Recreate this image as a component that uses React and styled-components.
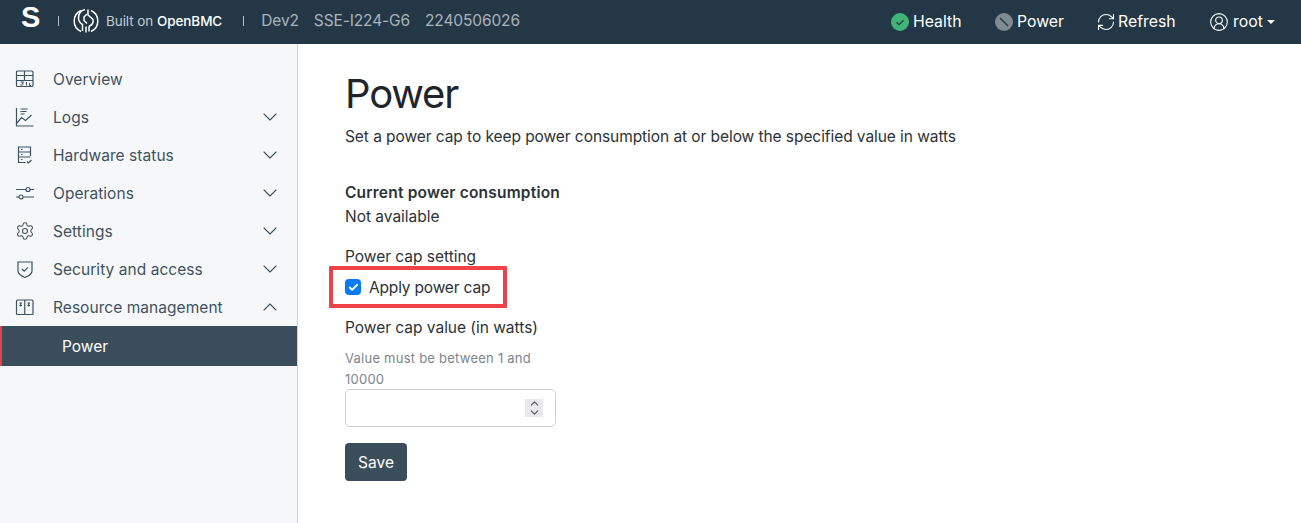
import React from 'react';
import styled, { createGlobalStyle } from 'styled-components';
import { ChevronDown, ChevronUp, RefreshCw, CircleUserRound, Settings, Check } from 'lucide-react';

const Global = createGlobalStyle`
  html, body { margin: 0; padding: 0; height: 100%; overflow: hidden; }
  body { font-family: Inter, "Noto Sans", "Liberation Sans", sans-serif; color: #212529; background: #fff; }
  * { box-sizing: border-box; }
`;
const Page = styled.div`display: flex; flex-direction: column; height: 523px;`;
const Header = styled.header`
  height: 44px; background: #233746; display: flex; align-items: center; justify-content: space-between; flex: none;
`;
const Brand = styled.div`display: flex; align-items: center; height: 100%; padding: 0 0 3px 21px; color: #b8c0c6;`;
const Logo = styled.span`font: 800 29px/1 "Liberation Sans", sans-serif; color: #fff; width: 21px; margin-top: -6px;`;
const Sep = styled.span`width: 1px; height: 10px; background: #b8c0c6; margin: ${p => p.$m};`;
const Built = styled.span`font-size: 13.5px; letter-spacing: -0.08px; color: #c4cbd0; margin-left: 7px; b { font-weight: 500; color: #fff; }`;
const Meta = styled.span`font-size: 15.5px; letter-spacing: -0.12px; color: #aab4bb; margin-right: ${p => p.$mr || 0}px;`;
const Actions = styled.div`display: flex; align-items: center; height: 100%; padding-bottom: 1px;`;
const Action = styled.div`
  display: flex; align-items: center; gap: ${p => p.$gap || 4}px; color: #fff; font-size: 15.8px; width: ${p => p.$w}px;
`;
const Caret = styled.span`
  width: 0; height: 0; border-left: 4px solid transparent; border-right: 4px solid transparent; border-top: 4px solid #fff;
`;
const Body = styled.div`display: flex; flex: 1; min-height: 0;`;
const Side = styled.nav`
  width: 298px; flex: none; background: #f5f7f9; border-right: 1px solid #cfd2d6; padding-top: 16px;
`;
const Item = styled.div`
  height: 38px; display: flex; align-items: center; padding: 0 15px; color: #3f5261; font-size: 15.5px; letter-spacing: 0.05px;
  & > span { flex: 1; margin-left: 18px; }
`;
const Sub = styled.div`
  height: 40px; display: flex; align-items: center; padding-left: 60px; background: #3a4d5b; color: #fff; font-size: 15.5px;
  border-left: 2px solid #e5414a;
`;
const Main = styled.main`flex: 1; padding: 26px 0 0 47px; min-width: 0;`;
const H1 = styled.h1`margin: 0; font-size: 40px; line-height: 48px; font-weight: 400; letter-spacing: -1.2px; color: #212529;`;
const Lead = styled.p`margin: 7px 0 0; font-size: 15.5px; line-height: 24px; letter-spacing: -0.07px; color: #2b3238;`;
const Label = styled.div`font-size: 15.5px; line-height: 24px; letter-spacing: ${p => p.$bold ? 0.2 : -0.02}px; font-weight: ${p => p.$bold ? 600 : 400}; margin-top: ${p => p.$mt || 0}px; color: #2b3238;`;
const Hl = styled.div`
  width: 178px; height: 42px; margin: -3px 0 0 -16px; border: 4px solid #ee4248; border-radius: 1px; padding-left: 12px;
  display: flex; align-items: center; gap: 8px; font-size: 15.5px; letter-spacing: -0.18px; background: #fff; color: #2b3238;
`;
const Box = styled.span`
  width: 16px; height: 16px; border-radius: 4px; background: #0b7bf5; display: flex; align-items: center; justify-content: center; flex: none;
`;
const Hint = styled.div`width: 214px; font-size: 13px; line-height: 21px; margin-top: 8px; color: #7b858d; letter-spacing: 0.24px;`;
const Input = styled.div`
  width: 211px; height: 38px; margin-top: -1px; border: 1px solid #cdd1d8; border-radius: 5px; display: flex; align-items: center; justify-content: flex-end; padding-right: 12px; background: #fff;
`;
const Spin = styled.span`
  width: 18px; height: 18px; background: #e9e9ed; display: flex; flex-direction: column; align-items: center; justify-content: center;
  svg { flex: none; margin: -2px 0; }
`;
const Save = styled.button`
  display: block; width: 62px; height: 38px; margin-top: 16px; border: 0; border-radius: 4px; background: #3a4d5b; color: #fff; font: inherit; font-size: 15.5px;
`;

const S = { fill: 'none', stroke: '#3f5261', strokeWidth: 1.2 };
const I = ({ children }) => <svg width="20" height="20" viewBox="0 0 20 20" {...S}>{children}</svg>;
const rows = [
  ['Overview', <I><rect x="1.500" y="2" width="16.500" height="15.500" rx="1" /><path d="M1.500 6.500h16.500M1.500 11.500h16.500M9.500 2v9.500" /><path d="M5.500 13h3l-1.200 1.300c1.500 0 1.500 2-2 1.700M11.500 13v3.500M14.500 14v2.500h1.500" strokeWidth="1" /></I>, 0],
  ['Logs', <I><path d="M1.500 1v18h17M5.500 2h7M5.500 4.500h6M5.500 7h4" /><path d="M2 16l4.500-5.500 4 3 6-5.500" /></I>, 'd'],
  ['Hardware status', <I><path d="M15.500 11V2H3.500v15.500h7" /><path d="M3.500 7h12M3.500 12h12M6 4.500h1.500M6 9.500h1.500M6 14.500h1.500M12 16.500l1.500 1.500 3-3" /></I>, 'd'],
  ['Operations', <I><path d="M1 6.500h10M15 6.500h4M1 14h3M8.500 14h10.500" /><circle cx="13" cy="6.500" r="2" /><circle cx="6" cy="14" r="2" /></I>, 'd'],
  ['Settings', <Settings size={20} color="#3f5261" strokeWidth={1.3} />, 'd'],
  ['Security and access', <I><path d="M3 3h14v9c0 3-3.500 5-7 6.500C6.500 17 3 15 3 12z" /><path d="M7 10l2.200 2.200 3.800-3.800" /></I>, 'd'],
  ['Resource management', <I><rect x="1.500" y="3" width="16.500" height="14.500" rx="1" /><path d="M9.750 3v14.500M4.500 6H7M4.500 8.500H7M12.500 6H15M12.500 8.500H15M5.750 6v3.500M13.750 6v3.500" /></I>, 'u'],
];

const Emblem = () => (
  <svg width="26" height="26" viewBox="0 0 26 26" fill="none" stroke="#fff" strokeWidth="1.5" style={{ marginLeft: 14 }}>
    <path d="M8 2.500C3.500 4.500 1.200 8.500 1.200 13c0 4.500 2.300 8.500 6.800 10.500M18 2.500c4.500 2 6.800 6 6.800 10.500 0 4.500-2.300 8.500-6.800 10.500" />
    <path d="M12 1.500c-4 1-6.500 4.500-6.500 8.500 0 3 1.500 5 4 6.500v6.500M14 6l-3 3v3.500l3 3" />
    <path d="M15 1.500v5.500l5 4.500c.5 3-1 5.500-3.500 6.500l-.5 1v4.500M13 24.500v-6" />
  </svg>
);

export default function App() {
  return (
    <Page>
      <Global />
      <Header>
        <Brand>
          <Logo>S</Logo>
          <Sep $m="0 0 0 16px" />
          <Emblem />
          <Built>Built on <b>OpenBMC</b></Built>
          <Sep $m="0 17px 0 21px" />
          <Meta $mr={15}>Dev2</Meta>
          <Meta $mr={15}>SSE-I224-G6</Meta>
          <Meta>2240506026</Meta>
        </Brand>
        <Actions>
          <Action $w={104}>
            <svg width="18" height="18" viewBox="0 0 18 18"><circle cx="9" cy="9" r="9" fill="#41b577" /><path d="M5.500 9.200l2.500 2.500 4.500-4.500" fill="none" stroke="#233746" strokeWidth="1.300" /></svg>
            Health
          </Action>
          <Action $w={101}>
            <svg width="18" height="18" viewBox="0 0 18 18"><circle cx="9" cy="9" r="9" fill="#7f8a92" /><path d="M5 5l8 8" stroke="#233746" strokeWidth="1.400" /></svg>
            Power
          </Action>
          <Action $w={113} $gap={2}>
            <RefreshCw size={20} color="#fff" strokeWidth={1.3} />
            Refresh
          </Action>
          <Action $w={92} $gap={4}>
            <CircleUserRound size={20} color="#fff" strokeWidth={1.3} />
            root
            <Caret />
          </Action>
        </Actions>
      </Header>
      <Body>
        <Side>
          {rows.map(([t, ic, c]) => (
            <Item key={t}>
              {ic}
              <span>{t}</span>
              {c === 'd' && <ChevronDown size={24} color="#3f5261" strokeWidth={1.1} />}
              {c === 'u' && <ChevronUp size={24} color="#3f5261" strokeWidth={1.1} />}
            </Item>
          ))}
          <Sub>Power</Sub>
        </Side>
        <Main>
          <H1>Power</H1>
          <Lead>Set a power cap to keep power consumption at or below the specified value in watts</Lead>
          <Label $bold $mt={32}>Current power consumption</Label>
          <Label>Not available</Label>
          <Label $mt={16}>Power cap setting</Label>
          <Hl>
            <Box><Check size={11} color="#fff" strokeWidth={4} /></Box>
            Apply power cap
          </Hl>
          <Label $mt={8}>Power cap value (in watts)</Label>
          <Hint>Value must be between 1 and 10000</Hint>
          <Input>
            <Spin>
              <ChevronUp size={13} color="#555" strokeWidth={2} />
              <ChevronDown size={13} color="#555" strokeWidth={2} />
            </Spin>
          </Input>
          <Save>Save</Save>
        </Main>
      </Body>
    </Page>
  );
}
